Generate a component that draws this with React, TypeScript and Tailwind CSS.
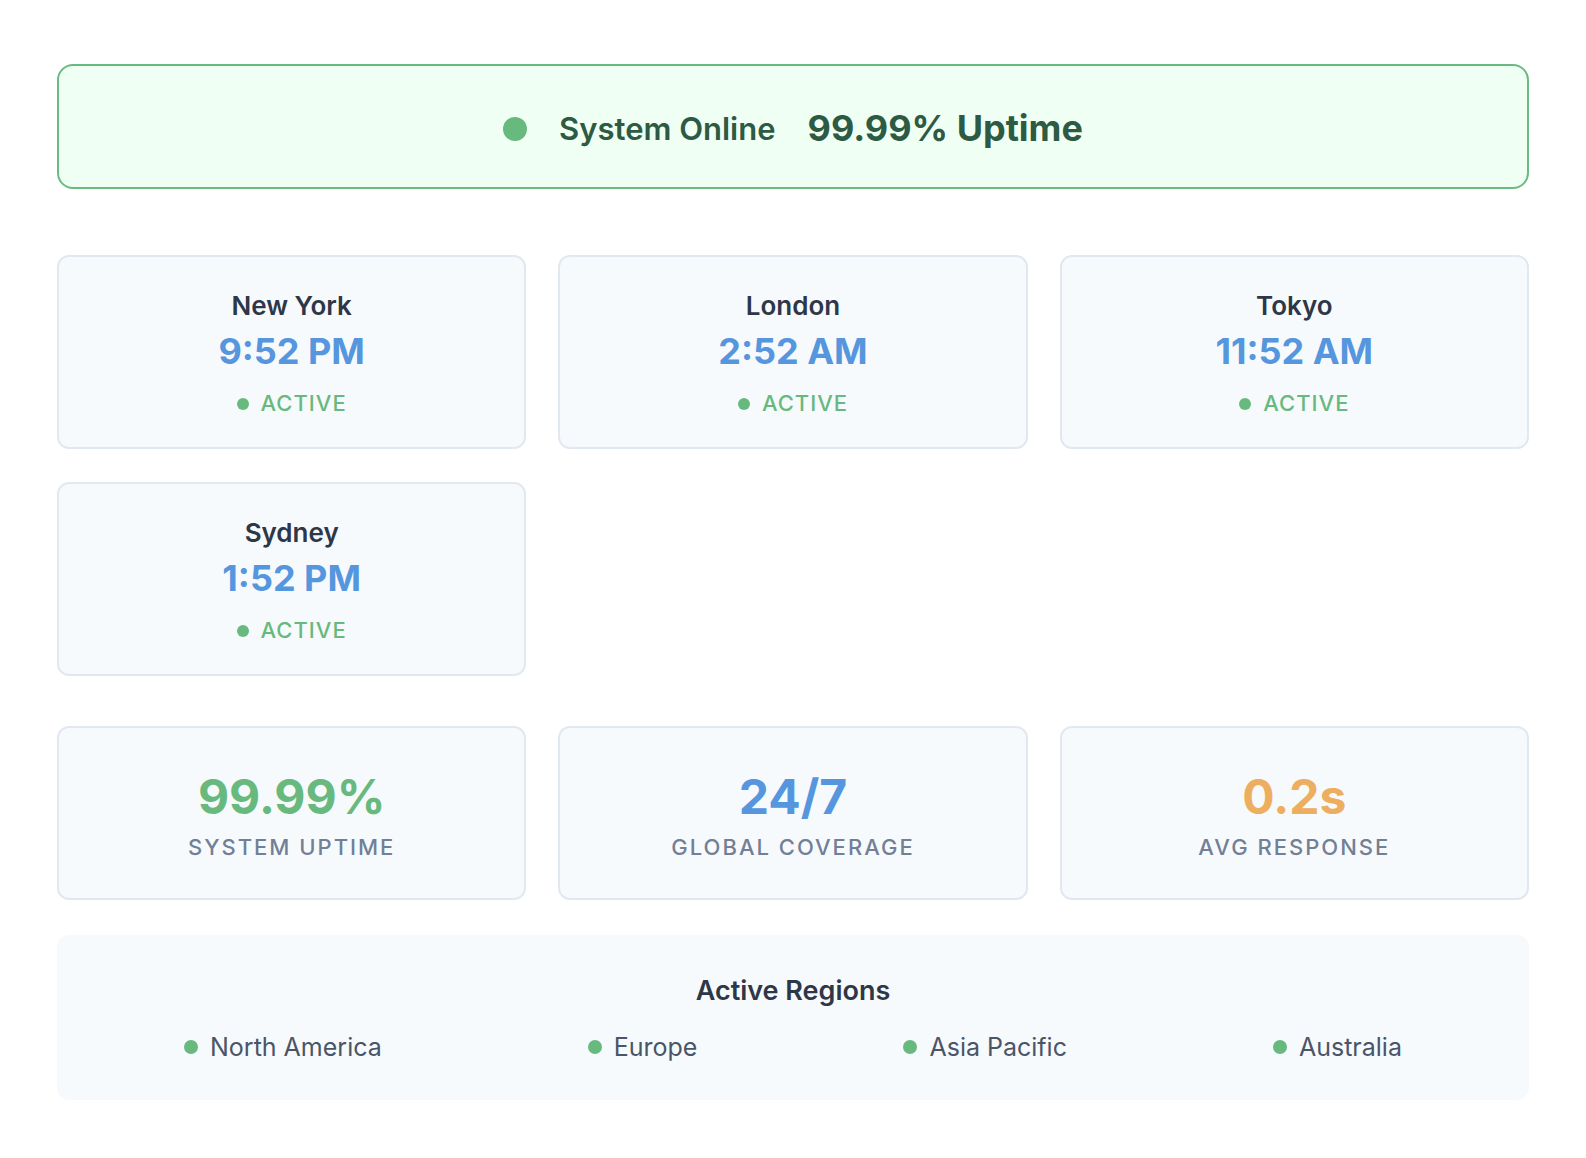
const cities = [
  { name: "New York", time: "9:52 PM" },
  { name: "London", time: "2:52 AM" },
  { name: "Tokyo", time: "11:52 AM" },
  { name: "Sydney", time: "1:52 PM" },
];

const stats = [
  { value: "99.99%", label: "System Uptime", color: "text-[#68b97e]" },
  { value: "24/7", label: "Global Coverage", color: "text-[#5596de]" },
  { value: "0.2s", label: "Avg Response", color: "text-[#edae5f]" },
];

const regions = ["North America", "Europe", "Asia Pacific", "Australia"];

export default function App() {
  return (
    <div className="min-h-screen bg-white px-[57px] pt-[64px] pb-[58px] font-[Inter,sans-serif]">
      {/* status banner */}
      <div className="flex items-center justify-center gap-8 rounded-2xl border-2 border-[#6bbb80] bg-[#f0fff4] pt-[40px] pb-[36px]">
        <span className="h-6 w-6 rounded-full bg-[#68b97e]" />
        <span className="text-[31px] leading-[45px] font-semibold text-[#2d5a42]">
          System Online
        </span>
        <span className="text-[36px] leading-[45px] font-bold text-[#2d5a42]">
          99.99% Uptime
        </span>
      </div>

      <div className="mt-[66px] grid grid-cols-3 gap-x-8 gap-y-[33px]">
        {cities.map((city) => (
          <div
            key={city.name}
            className="rounded-xl border-2 border-[#e2e8f0] bg-[#f7fafc] px-[31px] pt-[31px] pb-[27px] text-center"
          >
            <div className="text-[26px] leading-[36px] font-semibold text-[#2d3748]">
              {city.name}
            </div>
            <div className="text-[36px] leading-[54px] font-bold text-[#5596de]">
              {city.time}
            </div>
            <div className="mt-[9px] flex items-center justify-center gap-3 text-[22px] leading-[33px] font-medium tracking-[1px] text-[#68b97e]">
              <span className="h-3 w-3 rounded-full bg-[#68b97e]" />
              ACTIVE
            </div>
          </div>
        ))}
      </div>

      <div className="mt-[50px] grid grid-cols-3 gap-8">
        {stats.map((stat) => (
          <div
            key={stat.label}
            className="rounded-xl border-2 border-[#e2e8f0] bg-[#f7fafc] px-[31px] pt-[35px] pb-[34px] text-center"
          >
            <div className={`text-[48px] leading-[68px] font-bold ${stat.color}`}>
              {stat.value}
            </div>
            <div className="text-[22px] leading-[33px] font-medium tracking-[2px] uppercase text-[#718096]">
              {stat.label}
            </div>
          </div>
        ))}
      </div>

      <div className="mt-[35px] rounded-xl bg-[#f7fafc] px-6 pt-[38px] pb-[35px]">
        <div className="text-center text-[27px] leading-[36px] font-semibold text-[#2d3748]">
          Active Regions
        </div>
        <div className="mt-[20px] flex justify-around">
          {regions.map((region) => (
            <div
              key={region}
              className="flex items-center gap-3 text-[25px] leading-[36px] text-[#4a5568]"
            >
              <span className="h-3.5 w-3.5 rounded-full bg-[#68b97e]" />
              {region}
            </div>
          ))}
        </div>
      </div>
    </div>
  );
}
